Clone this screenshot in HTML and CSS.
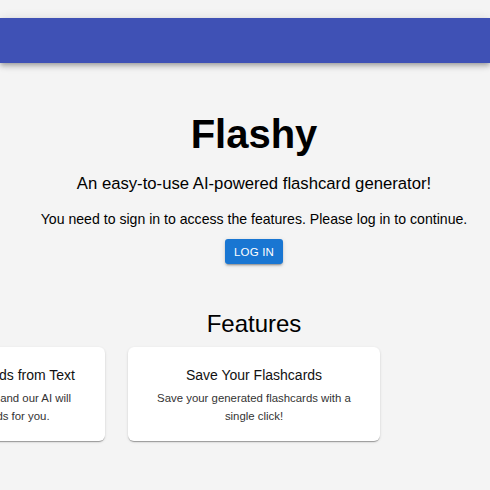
FILE: index.html
```html
<!DOCTYPE html>
<html lang="en">
<head>
<meta charset="utf-8">
<title>Flashy</title>
<link rel="stylesheet" href="styles.css">
</head>
<body>
<div class="page">
  <header class="appbar"></header>
  <main class="main">
    <h1 class="title">Flashy</h1>
    <p class="subtitle">An easy-to-use AI-powered flashcard generator!</p>
    <p class="notice">You need to sign in to access the features. Please log in to continue.</p>
    <button class="login">LOG IN</button>
    <h2 class="features-title">Features</h2>
    <div class="cards">
      <div class="card">
        <h3 class="card-title">Generate Flashcards from Text</h3>
        <p class="card-text">Simply enter your text and our AI will generate flashcards for you.</p>
      </div>
      <div class="card">
        <h3 class="card-title">Save Your Flashcards</h3>
        <p class="card-text">Save your generated flashcards with a single click!</p>
      </div>
      <div class="card-slot"></div>
    </div>
  </main>
</div>
</body>
</html>
```
FILE: styles.css
```css
html, body {
  margin: 0;
  padding: 0;
  overflow: hidden;
  background: #f4f4f4;
  font-family: "Liberation Sans", Arial, sans-serif;
  color: #000;
}

.page {
  padding-top: 18px;
  min-height: 490px;
  box-sizing: border-box;
}

.appbar {
  height: 45px;
  background: #3f51b5;
  box-shadow: 0 2px 4px -1px rgba(0,0,0,0.2), 0 4px 5px 0 rgba(0,0,0,0.14), 0 1px 10px 0 rgba(0,0,0,0.12);
}

.main {
  margin-left: 18px;
  width: 472px;
  padding-top: 47px;
  display: flex;
  flex-direction: column;
  align-items: center;
  text-align: center;
}

.title {
  margin: 0;
  font-size: 40px;
  line-height: 48px;
  font-weight: 700;
}

.subtitle {
  margin: 13.5px 0 0;
  font-size: 16.7px;
  line-height: 24px;
  white-space: nowrap;
}

.notice {
  margin: 13px 0 0;
  font-size: 14.1px;
  line-height: 20px;
  white-space: nowrap;
}

.login {
  margin-top: 10.5px;
  width: 58px;
  height: 25px;
  padding: 0;
  border: none;
  border-radius: 3px;
  background: #1976d2;
  color: #fff;
  font-family: "Liberation Sans", Arial, sans-serif;
  font-size: 11.5px;
  font-weight: 400;
  letter-spacing: 0.2px;
  box-shadow: 0 3px 1px -2px rgba(0,0,0,0.2), 0 2px 2px 0 rgba(0,0,0,0.14), 0 1px 5px 0 rgba(0,0,0,0.12);
}

.features-title {
  margin: 46px 0 0;
  font-size: 24px;
  line-height: 28px;
  font-weight: 400;
}

.cards {
  margin-top: 9px;
  width: 100%;
  display: flex;
  justify-content: center;
  gap: 23px;
}

.card, .card-slot {
  flex: 0 0 252px;
  width: 252px;
  box-sizing: border-box;
}

.card {
  height: 94px;
  padding: 18px 16px 0;
  background: #fff;
  border-radius: 6px;
  box-shadow: 0 2px 1px -1px rgba(0,0,0,0.2), 0 1px 1px 0 rgba(0,0,0,0.14), 0 1px 3px 0 rgba(0,0,0,0.12);
}

.card-title {
  margin: 0;
  font-size: 14px;
  line-height: 20px;
  font-weight: 400;
  color: #111;
}

.card-text {
  margin: 5px 0 0;
  font-size: 11.4px;
  line-height: 17.5px;
  color: #333;
}
```
